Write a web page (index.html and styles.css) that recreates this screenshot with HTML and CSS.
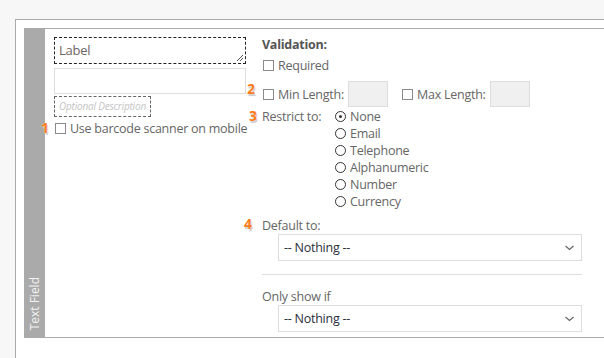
FILE: index.html
```html
<!DOCTYPE html>
<html>
<head>
<meta charset="utf-8">
<link rel="stylesheet" href="styles.css">
</head>
<body>
<div class="outer">
  <div class="panel">
    <div class="sidebar"><span class="side-title">Text Field</span></div>
    <div class="left">
      <div class="label-box">Label<svg class="grip" width="8" height="8" viewBox="0 0 8 8"><path d="M7 1L1 7M7 4L4 7" stroke="#555" stroke-width="1"/></svg></div>
      <div class="plain-box"></div>
      <div class="desc-box">Optional Description</div>
      <div class="row check-row">
        <span class="badge b1">1</span>
        <span class="cb"></span>
        <span>Use barcode scanner on mobile</span>
      </div>
    </div>
    <div class="right">
      <div class="heading">Validation:</div>
      <div class="row req-row"><span class="cb"></span><span>Required</span></div>
      <div class="row len-row">
        <span class="badge b2">2</span>
        <span class="cb"></span><span class="len-label">Min Length:</span><span class="num-box"></span>
        <span class="cb cb-max"></span><span class="len-label">Max Length:</span><span class="num-box"></span>
      </div>
      <div class="restrict">
        <span class="badge b3">3</span>
        <span class="restrict-label">Restrict to:</span>
        <div class="radios">
          <div class="radio-row"><span class="radio on"></span>None</div>
          <div class="radio-row"><span class="radio"></span>Email</div>
          <div class="radio-row"><span class="radio"></span>Telephone</div>
          <div class="radio-row"><span class="radio"></span>Alphanumeric</div>
          <div class="radio-row"><span class="radio"></span>Number</div>
          <div class="radio-row"><span class="radio"></span>Currency</div>
        </div>
      </div>
      <div class="field default-field">
        <span class="badge b4">4</span>
        <div class="field-label">Default to:</div>
        <div class="select"><span>-- Nothing --</span><svg class="chev" width="9" height="6" viewBox="0 0 9 6"><path d="M0.5 1L4.5 4.5L8.5 1" fill="none" stroke="#666" stroke-width="1.2"/></svg></div>
      </div>
      <div class="sep"></div>
      <div class="field">
        <div class="field-label">Only show if</div>
        <div class="select"><span>-- Nothing --</span><svg class="chev" width="9" height="6" viewBox="0 0 9 6"><path d="M0.5 1L4.5 4.5L8.5 1" fill="none" stroke="#666" stroke-width="1.2"/></svg></div>
      </div>
    </div>
  </div>
</div>
</body>
</html>
```
FILE: styles.css
```css
html, body {
  margin: 0;
  padding: 0;
  background: #f7f7f7;
  height: 358px;
  overflow: hidden;
  font-family: "Open Sans", "Noto Sans", sans-serif;
  font-size: 12.5px;
  letter-spacing: -0.25px;
  color: #555;
}
.outer {
  margin: 19px 0 0 15px;
  border-left: 1px solid #aaa;
  border-top: 1px solid #aaa;
  background: #fff;
  height: 340px;
  padding: 8px 0 0 8px;
}
.panel {
  display: flex;
  border-top: 1px solid #aaa;
  border-bottom: 1px solid #aaa;
  height: 308px;
}
.sidebar {
  width: 21px;
  background: #aaa;
  display: flex;
  flex-direction: column;
  justify-content: flex-end;
  align-items: center;
  padding-bottom: 7px;
  box-sizing: border-box;
}
.side-title {
  writing-mode: vertical-rl;
  transform: rotate(180deg);
  color: #f2f2f2;
  font-size: 12px;
  line-height: 12px;
  letter-spacing: 0;
}
.left {
  width: 192px;
  margin-left: 9px;
  padding-top: 8px;
}
.label-box {
  position: relative;
  height: 27px;
  box-sizing: border-box;
  border: 1px dashed #222;
  padding-left: 4px;
  line-height: 24px;
  font-size: 13px;
  color: #6f6464;
}
.grip {
  position: absolute;
  right: 1px;
  bottom: 1px;
}
.plain-box {
  margin-top: 4px;
  height: 26px;
  box-sizing: border-box;
  border: 1px solid #ddd;
}
.desc-box {
  margin-top: 2px;
  width: 97px;
  height: 21px;
  box-sizing: border-box;
  border: 1px dashed #666;
  font-style: italic;
  font-size: 10px;
  letter-spacing: -0.2px;
  color: #c4c4c4;
  line-height: 19px;
  padding-left: 4px;
  white-space: nowrap;
}
.row {
  position: relative;
  display: flex;
  align-items: center;
}
.check-row {
  margin-top: 4px;
  height: 15px;
  white-space: nowrap;
  color: #666;
}
.cb {
  display: inline-block;
  width: 11px;
  height: 11px;
  box-sizing: border-box;
  border: 1px solid #8a8a8a;
  background: #fff;
  margin: 0 4px 0 1px;
  flex: none;
}
.badge {
  position: absolute;
  color: #ff7a1a;
  font-weight: bold;
  font-size: 14px;
  line-height: 14px;
  letter-spacing: 0;
  text-shadow: 0 0 1px #fff, 1px 2px 1px #c8c8c8;
}
.b1 { left: -13px; top: 0; }
.b2 { left: -15px; top: 1px; }
.b3 { left: -13px; top: 1px; }
.b4 { left: -18px; top: 0; }
.right {
  width: 320px;
  margin-left: 16px;
  padding-top: 7px;
  color: #666;
}
.heading {
  font-weight: bold;
  color: #555;
  line-height: 17px;
}
.req-row {
  margin-top: 5px;
  height: 14px;
}
.len-row {
  margin-top: 9px;
  height: 26px;
}
.len-label {
  margin-right: 4px;
}
.num-box {
  width: 40px;
  height: 26px;
  box-sizing: border-box;
  border: 1px solid #ddd;
  background: #f0f0f0;
}
.cb-max {
  margin-left: 14px;
}
.restrict {
  position: relative;
  display: flex;
  margin-top: 1px;
}
.restrict-label {
  width: 73px;
  line-height: 17px;
}
.radio-row {
  display: flex;
  align-items: center;
  height: 17px;
}
.radio {
  width: 11px;
  height: 11px;
  box-sizing: border-box;
  border: 1.5px solid #333;
  border-radius: 50%;
  margin-right: 4px;
  position: relative;
}
.radio.on::after {
  content: "";
  position: absolute;
  left: 2.5px;
  top: 2.5px;
  width: 3px;
  height: 3px;
  border-radius: 50%;
  background: #333;
}
.field {
  position: relative;
}
.default-field {
  margin-top: 7px;
}
.field-label {
  line-height: 17px;
}
.select {
  margin: 0 0 0 16px;
  height: 27px;
  box-sizing: border-box;
  border: 1px solid #ddd;
  display: flex;
  align-items: center;
  justify-content: space-between;
  padding: 0 7px 0 5px;
  color: #2a2f3a;
}
.sep {
  margin-top: 13px;
  height: 1px;
  background: #ddd;
}
.sep + .field {
  margin-top: 13px;
}
```
